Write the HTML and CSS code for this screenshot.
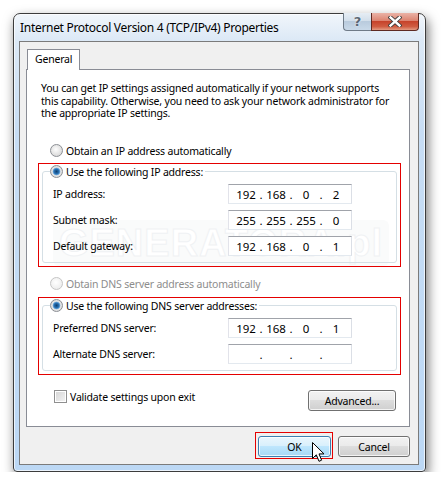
FILE: index.html
```html
<!DOCTYPE html>
<html lang="en">
<head>
    <meta charset="UTF-8">
    <title>Internet Protocol Version 4 (TCP/IPv4) Properties</title>
    <link rel="stylesheet" href="styles.css">
</head>
<body>
    <div class="window">
        <div class="titlebar">
            <span class="title">Internet Protocol Version 4 (TCP/IPv4) Properties</span>
            <div class="caption-btns">
                <span class="cap-help">?</span>
                <span class="cap-close">
                    <svg width="14" height="11" viewBox="0 0 14 11">
                        <path d="M2.5 1.5 L11.5 9.5 M11.5 1.5 L2.5 9.5" stroke="#3b3b3b" stroke-width="4.2" stroke-linecap="square" fill="none"/>
                        <path d="M2.5 1.5 L11.5 9.5 M11.5 1.5 L2.5 9.5" stroke="#fff" stroke-width="2.4" stroke-linecap="square" fill="none"/>
                    </svg>
                </span>
            </div>
        </div>
        <div class="client">
            <div class="tabs"><span class="tab">General</span></div>
            <div class="tab-panel">
                <div class="watermark"><span>GENERATORA.pl</span></div>
                <p class="intro">You can get IP settings assigned automatically if your network supports this capability. Otherwise, you need to ask your network administrator for the appropriate IP settings.</p>

                <label class="radio-row"><span class="radio"></span>Obtain an IP address automatically</label>
                <div class="mark">
                    <fieldset class="group">
                        <legend><span class="radio checked"></span>Use the following IP address:</legend>
                        <div class="field-grid">
                            <span>IP address:</span>
                            <div class="ipbox"><span>192</span><i>.</i><span>168</span><i>.</i><span>0</span><i>.</i><span>2</span></div>
                            <span>Subnet mask:</span>
                            <div class="ipbox"><span>255</span><i>.</i><span>255</span><i>.</i><span>255</span><i>.</i><span>0</span></div>
                            <span>Default gateway:</span>
                            <div class="ipbox"><span>192</span><i>.</i><span>168</span><i>.</i><span>0</span><i>.</i><span>1</span></div>
                        </div>
                    </fieldset>
                </div>

                <label class="radio-row disabled"><span class="radio"></span>Obtain DNS server address automatically</label>
                <div class="mark">
                    <fieldset class="group">
                        <legend><span class="radio checked"></span>Use the following DNS server addresses:</legend>
                        <div class="field-grid">
                            <span>Preferred DNS server:</span>
                            <div class="ipbox"><span>192</span><i>.</i><span>168</span><i>.</i><span>0</span><i>.</i><span>1</span></div>
                            <span>Alternate DNS server:</span>
                            <div class="ipbox"><span></span><i>.</i><span></span><i>.</i><span></span><i>.</i><span></span></div>
                        </div>
                    </fieldset>
                </div>

                <div class="bottom-row">
                    <label class="check-row"><span class="checkbox"></span>Validate settings upon exit</label>
                    <button class="btn btn-adv">Advanced...</button>
                </div>
            </div>
            <div class="dialog-btns">
                <span class="mark-ok"><button class="btn btn-ok">OK</button></span>
                <button class="btn btn-cancel">Cancel</button>
                <svg class="cursor" width="13" height="21" viewBox="0 0 13 21">
                    <path d="M0.5 0.5 L0.5 16.5 L4.3 12.8 L7 19.3 L9.6 18.2 L7 11.9 L12 11.9 Z" fill="#fff" stroke="#000" stroke-width="1" stroke-linejoin="miter"/>
                </svg>
            </div>
        </div>
    </div>
</body>
</html>
```

FILE: styles.css
```css
body { margin: 0; background: #fff; font-family: "Noto Sans", sans-serif; font-size: 10.5px; letter-spacing: -0.2px; color: #000; }

/* window frame */
.window { box-sizing: border-box; width: 413px; height: 459px; margin: 13px 0 0 13px; padding: 0 6px 6px 5px; border: 1px solid #3c3c3c; border-radius: 7px 7px 4px 4px; background: linear-gradient(#f1f6fb, #dce9f6 26px, #c7ddf4 120px, #bcd8f5); box-shadow: 2px 5px 12px rgba(0,0,0,.55), inset 0 0 0 1px rgba(255,255,255,.7); display: flex; flex-direction: column; }
.titlebar { height: 27px; display: flex; align-items: center; padding-left: 1px; flex-shrink: 0; }
.title { font-size: 12px; letter-spacing: -0.3px; color: #000; }
.caption-btns { margin-left: auto; align-self: flex-start; margin-top: -1px; display: flex; height: 18px; }
.cap-help { width: 27px; height: 17px; border: 1px solid #6f7b88; border-top: none; border-right: none; border-radius: 0 0 0 4px; background: linear-gradient(#e6edf4, #d3dfeb 45%, #b9cbdd 50%, #c9d9e9); color: #5b6775; font: bold 13px/17px "DejaVu Sans", sans-serif; letter-spacing: 0; text-align: center; text-shadow: 0 0 2px #fff; }
.cap-close { width: 46px; height: 17px; border: 1px solid #5e2a22; border-top: none; border-radius: 0 0 4px 0; background: linear-gradient(#eab3a7, #dc8471 45%, #c6432b 50%, #d05d42 80%, #e39c84); display: flex; align-items: center; justify-content: center; }

/* client area */
.client { flex: 1; border: 1px solid #7b7b7b; background: #f0f0f0; padding: 7px 8px 0 6px; }
.tabs { display: flex; padding-left: 1px; }
.tab { position: relative; z-index: 1; height: 20px; line-height: 19px; padding: 0 7px; border: 1px solid #898c95; border-bottom: none; background: #fff; margin-bottom: -1px; }
.tab-panel { position: relative; box-sizing: border-box; height: 358px; border: 1px solid #898c95; background: #fff; padding: 12px 8px 0 11px; }

.watermark { position: absolute; left: 26px; top: 150px; width: 336px; height: 46px; border-radius: 6px; background: #fafbfb; display: flex; align-items: center; justify-content: center; }
.watermark span { font: bold 38px/1 "Liberation Sans", sans-serif; color: #fff; -webkit-text-stroke: 1px #f0f2f4; letter-spacing: 1px; }

.intro { position: relative; width: 350px; margin: 0 0 0 3px; line-height: 12.7px; }

.radio-row { position: relative; display: flex; align-items: center; height: 15px; margin: 23px 0 5px 12px; }
.radio-row.disabled { color: #8d8d8d; margin: 9px 0 6px 12px; }
.radio { width: 11px; height: 11px; border: 1px solid #8c8f95; border-radius: 50%; background: radial-gradient(circle at 45% 40%, #fdfdfd, #dcdcdc 70%, #cfcfcf); margin-right: 3px; box-sizing: content-box; flex-shrink: 0; }
.disabled .radio { border-color: #c5c5c5; background: radial-gradient(circle at 45% 40%, #fff, #eee 70%, #e6e6e6); }
.radio.checked { background: radial-gradient(circle, #0f3f6e 0, #2a74b8 2.6px, #7fb4e0 3.6px, #e4e4e4 4.2px, #d2d2d2); }

/* red annotation boxes */
.mark { position: relative; border: 1px solid #e40000; padding: 0 3px 3px; }
.group { margin: 0; padding: 5px 10px 6px; border: 1px solid #d5dfe5; border-radius: 3px; }
.group legend { display: flex; align-items: center; height: 15px; padding: 0 2px 0 0; margin-left: -3px; background: #fff; }
.field-grid { display: grid; grid-template-columns: 175px 124px; row-gap: 6px; align-items: center; }
.ipbox { box-sizing: border-box; height: 20px; border: 1px solid #abadb3; border-top-color: #a0a3aa; border-bottom-color: #e3e9ef; border-left-color: #e2e3ea; border-right-color: #dbdfe6; background: #fff; display: flex; align-items: center; padding-left: 5px; font-size: 11.5px; letter-spacing: 0; }
.ipbox span { width: 24px; text-align: center; }
.ipbox i { font-style: normal; width: 6px; text-align: center; }

.bottom-row { display: flex; justify-content: space-between; align-items: flex-start; margin-top: 15px; padding: 0 5px 0 16px; }
.check-row { display: flex; align-items: center; height: 13px; }
.checkbox { box-sizing: border-box; width: 13px; height: 13px; border: 1px solid #8f8f8f; background: linear-gradient(135deg, #d4d4d4, #f4f4f4); box-shadow: inset 0 0 0 1px #fff; margin-right: 3px; }

/* buttons */
.btn { font: inherit; letter-spacing: inherit; box-sizing: border-box; height: 21px; border: 1px solid #707070; border-radius: 3px; background: linear-gradient(#f2f2f2, #ebebeb 45%, #dddddd 50%, #cfcfcf); box-shadow: inset 0 0 0 1px rgba(255,255,255,.75); padding: 0; color: #000; }
.btn-adv { width: 88px; }
.dialog-btns { position: relative; display: flex; justify-content: flex-end; align-items: flex-start; margin-top: 5px; }
.mark-ok { border: 1px solid #e40000; padding: 3px 1px 1px 2px; margin-right: 5px; display: flex; }
.btn-ok { width: 73px; height: 21px; border-color: #3c7fb1; background: linear-gradient(#eaf6fd, #d9f0fc 45%, #bee6fd 50%, #a7d9f5); }
.btn-cancel { width: 72px; margin-top: 4px; }
.cursor { position: absolute; left: 286px; top: 10px; }
```
